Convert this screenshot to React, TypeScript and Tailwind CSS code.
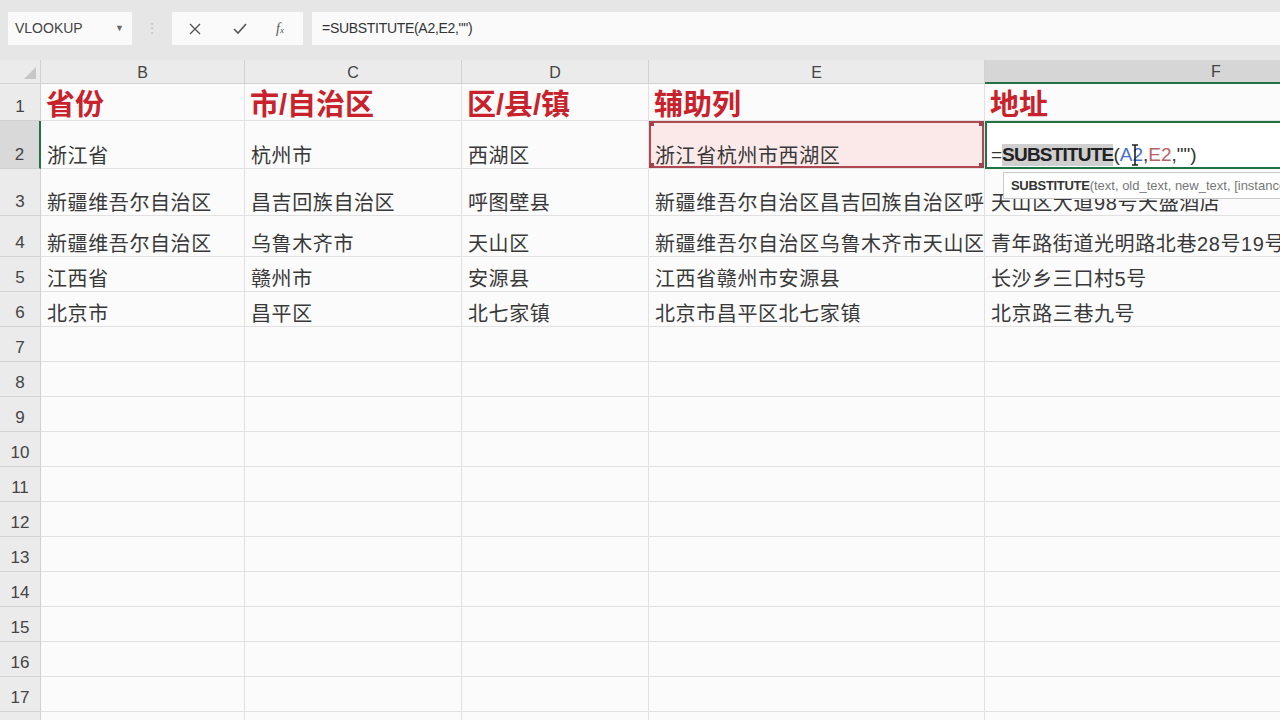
import React from "react";

const font = { fontFamily: '"Liberation Sans", "Noto Sans CJK SC", sans-serif' };

type Row = { n: number; h: string; cells: string[] };

const rows: Row[] = [
  { n: 3, h: "h-[47px]", cells: ["新疆维吾尔自治区", "昌吉回族自治区", "呼图壁县", "新疆维吾尔自治区昌吉回族自治区呼图壁县", "天山区大道98号天盛酒店"] },
  { n: 4, h: "h-[41px]", cells: ["新疆维吾尔自治区", "乌鲁木齐市", "天山区", "新疆维吾尔自治区乌鲁木齐市天山区", "青年路街道光明路北巷28号19号楼"] },
  { n: 5, h: "h-[35px]", cells: ["江西省", "赣州市", "安源县", "江西省赣州市安源县", "长沙乡三口村5号"] },
  { n: 6, h: "h-[35px]", cells: ["北京市", "昌平区", "北七家镇", "北京市昌平区北七家镇", "北京路三巷九号"] },
];

const emptyRows = [7, 8, 9, 10, 11, 12, 13, 14, 15, 16, 17, 18];

const widths = ["w-[204px]", "w-[217px]", "w-[187px]", "w-[336px]", "w-[462px]"];
const letters = ["B", "C", "D", "E", "F"];

function RowHead({ n, active }: { n: number; active?: boolean }) {
  return (
    <div
      className={
        active
          ? "flex w-[41px] shrink-0 items-end justify-center border-b border-r-2 border-b-[#cfcfcf] border-r-[#217346] bg-[#d9d9d9] pb-[1px] text-[17px] text-[#444]"
          : "flex w-[41px] shrink-0 items-end justify-center border-b border-r border-[#d2d2d2] bg-[#ebebeb] pb-[1px] text-[17px] text-[#444]"
      }
    >
      {n}
    </div>
  );
}

function Cell({ w, children }: { w: string; children?: React.ReactNode }) {
  return (
    <div
      className={`${w} relative flex shrink-0 items-end overflow-hidden whitespace-nowrap border-b border-r border-[#e1e1e1] pb-[2px] pl-[6px] text-[20px] leading-[20px] tracking-[0.6px] text-[#383838]`}
    >
      {children}
    </div>
  );
}

function Handle({ className }: { className: string }) {
  return <span className={`absolute h-[6px] w-[6px] bg-[#a2424a] ${className}`} />;
}

export default function App() {
  return (
    <div className="relative h-[720px] w-[1280px] overflow-hidden bg-[#fbfbfb]" style={font}>
      {/* formula bar */}
      <div className="flex h-[60px] items-start bg-[#e6e6e6] pt-[12px]">
        <div className="ml-[8px] flex h-[33px] w-[124px] items-center justify-between bg-[#fafafa] pl-[7px] pr-[8px] text-[14px] text-[#444]">
          <span>VLOOKUP</span>
          <span className="text-[9px] text-[#666]">▼</span>
        </div>
        <div className="flex h-[33px] w-[40px] items-center justify-center text-[14px] text-[#c4c4c4]">⋮</div>
        <div className="flex h-[33px] w-[131px] items-center bg-[#fafafa] text-[#555]">
          <svg className="ml-[16px]" width="14" height="14" viewBox="0 0 14 14" fill="none" stroke="#555" strokeWidth="1.4">
            <path d="M2 2l10 10M12 2L2 12" />
          </svg>
          <svg className="ml-[30px]" width="16" height="14" viewBox="0 0 16 14" fill="none" stroke="#555" strokeWidth="1.6">
            <path d="M2 7l4 4 8-9" />
          </svg>
          <span className="ml-[28px] text-[14px] italic text-[#555]" style={{ fontFamily: '"Liberation Serif", serif' }}>
            f<span className="text-[9px]">x</span>
          </span>
        </div>
        <div className="ml-[9px] flex h-[33px] flex-1 items-center bg-[#fafafa] pl-[10px] text-[14px] tracking-[-0.3px] text-[#333]">
          =SUBSTITUTE(A2,E2,"")
        </div>
      </div>

      {/* column headers */}
      <div className="flex h-[24px] bg-[#ebebeb]">
        <div className="relative w-[41px] shrink-0 border-b border-r border-[#d2d2d2]">
          <svg className="absolute bottom-[4px] right-[4px]" width="12" height="12" viewBox="0 0 12 12">
            <path d="M12 0V12H0Z" fill="#c6c6c6" />
          </svg>
        </div>
        {letters.map((l, i) => (
          <div
            key={l}
            className={
              l === "F"
                ? `${widths[i]} flex shrink-0 items-center justify-center border-b-2 border-[#217346] bg-[#d6d6d6] pt-[2px] text-[16px] text-[#444]`
                : `${widths[i]} flex shrink-0 items-center justify-center border-b border-r border-[#d2d2d2] pt-[2px] text-[16px] text-[#444]`
            }
          >
            {l}
          </div>
        ))}
      </div>

      {/* row 1 */}
      <div className="flex h-[37px]">
        <RowHead n={1} />
        {["省份", "市/自治区", "区/县/镇", "辅助列", "地址"].map((t, i) => (
          <div
            key={t}
            className={`${widths[i]} flex shrink-0 items-end border-b border-r border-[#e1e1e1] pl-[5px] text-[29px] font-bold leading-[30px] text-[#c8232c]`}
          >
            {t}
          </div>
        ))}
      </div>

      {/* row 2 */}
      <div className="flex h-[48px]">
        <RowHead n={2} active />
        <Cell w={widths[0]}>浙江省</Cell>
        <Cell w={widths[1]}>杭州市</Cell>
        <Cell w={widths[2]}>西湖区</Cell>
        <Cell w={widths[3]}>
          <div className="absolute inset-0 border-2 border-[#b04a52] bg-[#fbe9e9]" />
          <span className="relative">浙江省杭州市西湖区</span>
          <Handle className="-left-[1px] -top-[1px]" />
          <Handle className="-right-[1px] -top-[1px]" />
          <Handle className="-bottom-[1px] -left-[1px]" />
          <Handle className="-bottom-[1px] -right-[1px]" />
        </Cell>
        <div className="relative flex w-[462px] shrink-0 items-end overflow-hidden whitespace-nowrap border-2 border-[#217346] bg-white pb-[1px] pl-[4px] text-[19px] leading-[22px] text-[#333]">
          <span>=</span>
          <span className="bg-[#cfcfcf] font-bold tracking-[-0.8px] text-[#222]">SUBSTITUTE</span>
          <span>(</span>
          <span className="text-[#4a6fcf]">A</span>
          <span className="relative text-[#4a6fcf]">
            2
            <svg className="absolute -top-[1px] left-[-2px]" width="10" height="24" viewBox="0 0 10 24" fill="none" stroke="#222" strokeWidth="1.6">
              <path d="M2 2h6M5 2v20M2 22h6" />
            </svg>
          </span>
          <span className="text-[#333]">,</span>
          <span className="text-[#b5616a]">E2</span>
          <span>,"")</span>
        </div>
      </div>

      {/* data rows */}
      {rows.map((r) => (
        <div key={r.n} className={`flex ${r.h}`}>
          <RowHead n={r.n} />
          {r.cells.map((c, i) => (
            <Cell key={i} w={widths[i]}>
              {c}
            </Cell>
          ))}
        </div>
      ))}

      {emptyRows.map((n) => (
        <div key={n} className="flex h-[35px]">
          <RowHead n={n} />
          {widths.map((w, i) => (
            <Cell key={i} w={w} />
          ))}
        </div>
      ))}

      {/* function tooltip */}
      <div className="absolute left-[1003px] top-[172px] flex h-[27px] w-[300px] items-start whitespace-nowrap border border-[#c9c9c9] bg-white pl-[7px] pt-[3px] text-[13px] text-[#777]">
        <span className="font-bold tracking-[-0.3px] text-[#333]">SUBSTITUTE</span>
        <span>(text, old_text, new_text, [instance_num])</span>
      </div>
    </div>
  );
}
